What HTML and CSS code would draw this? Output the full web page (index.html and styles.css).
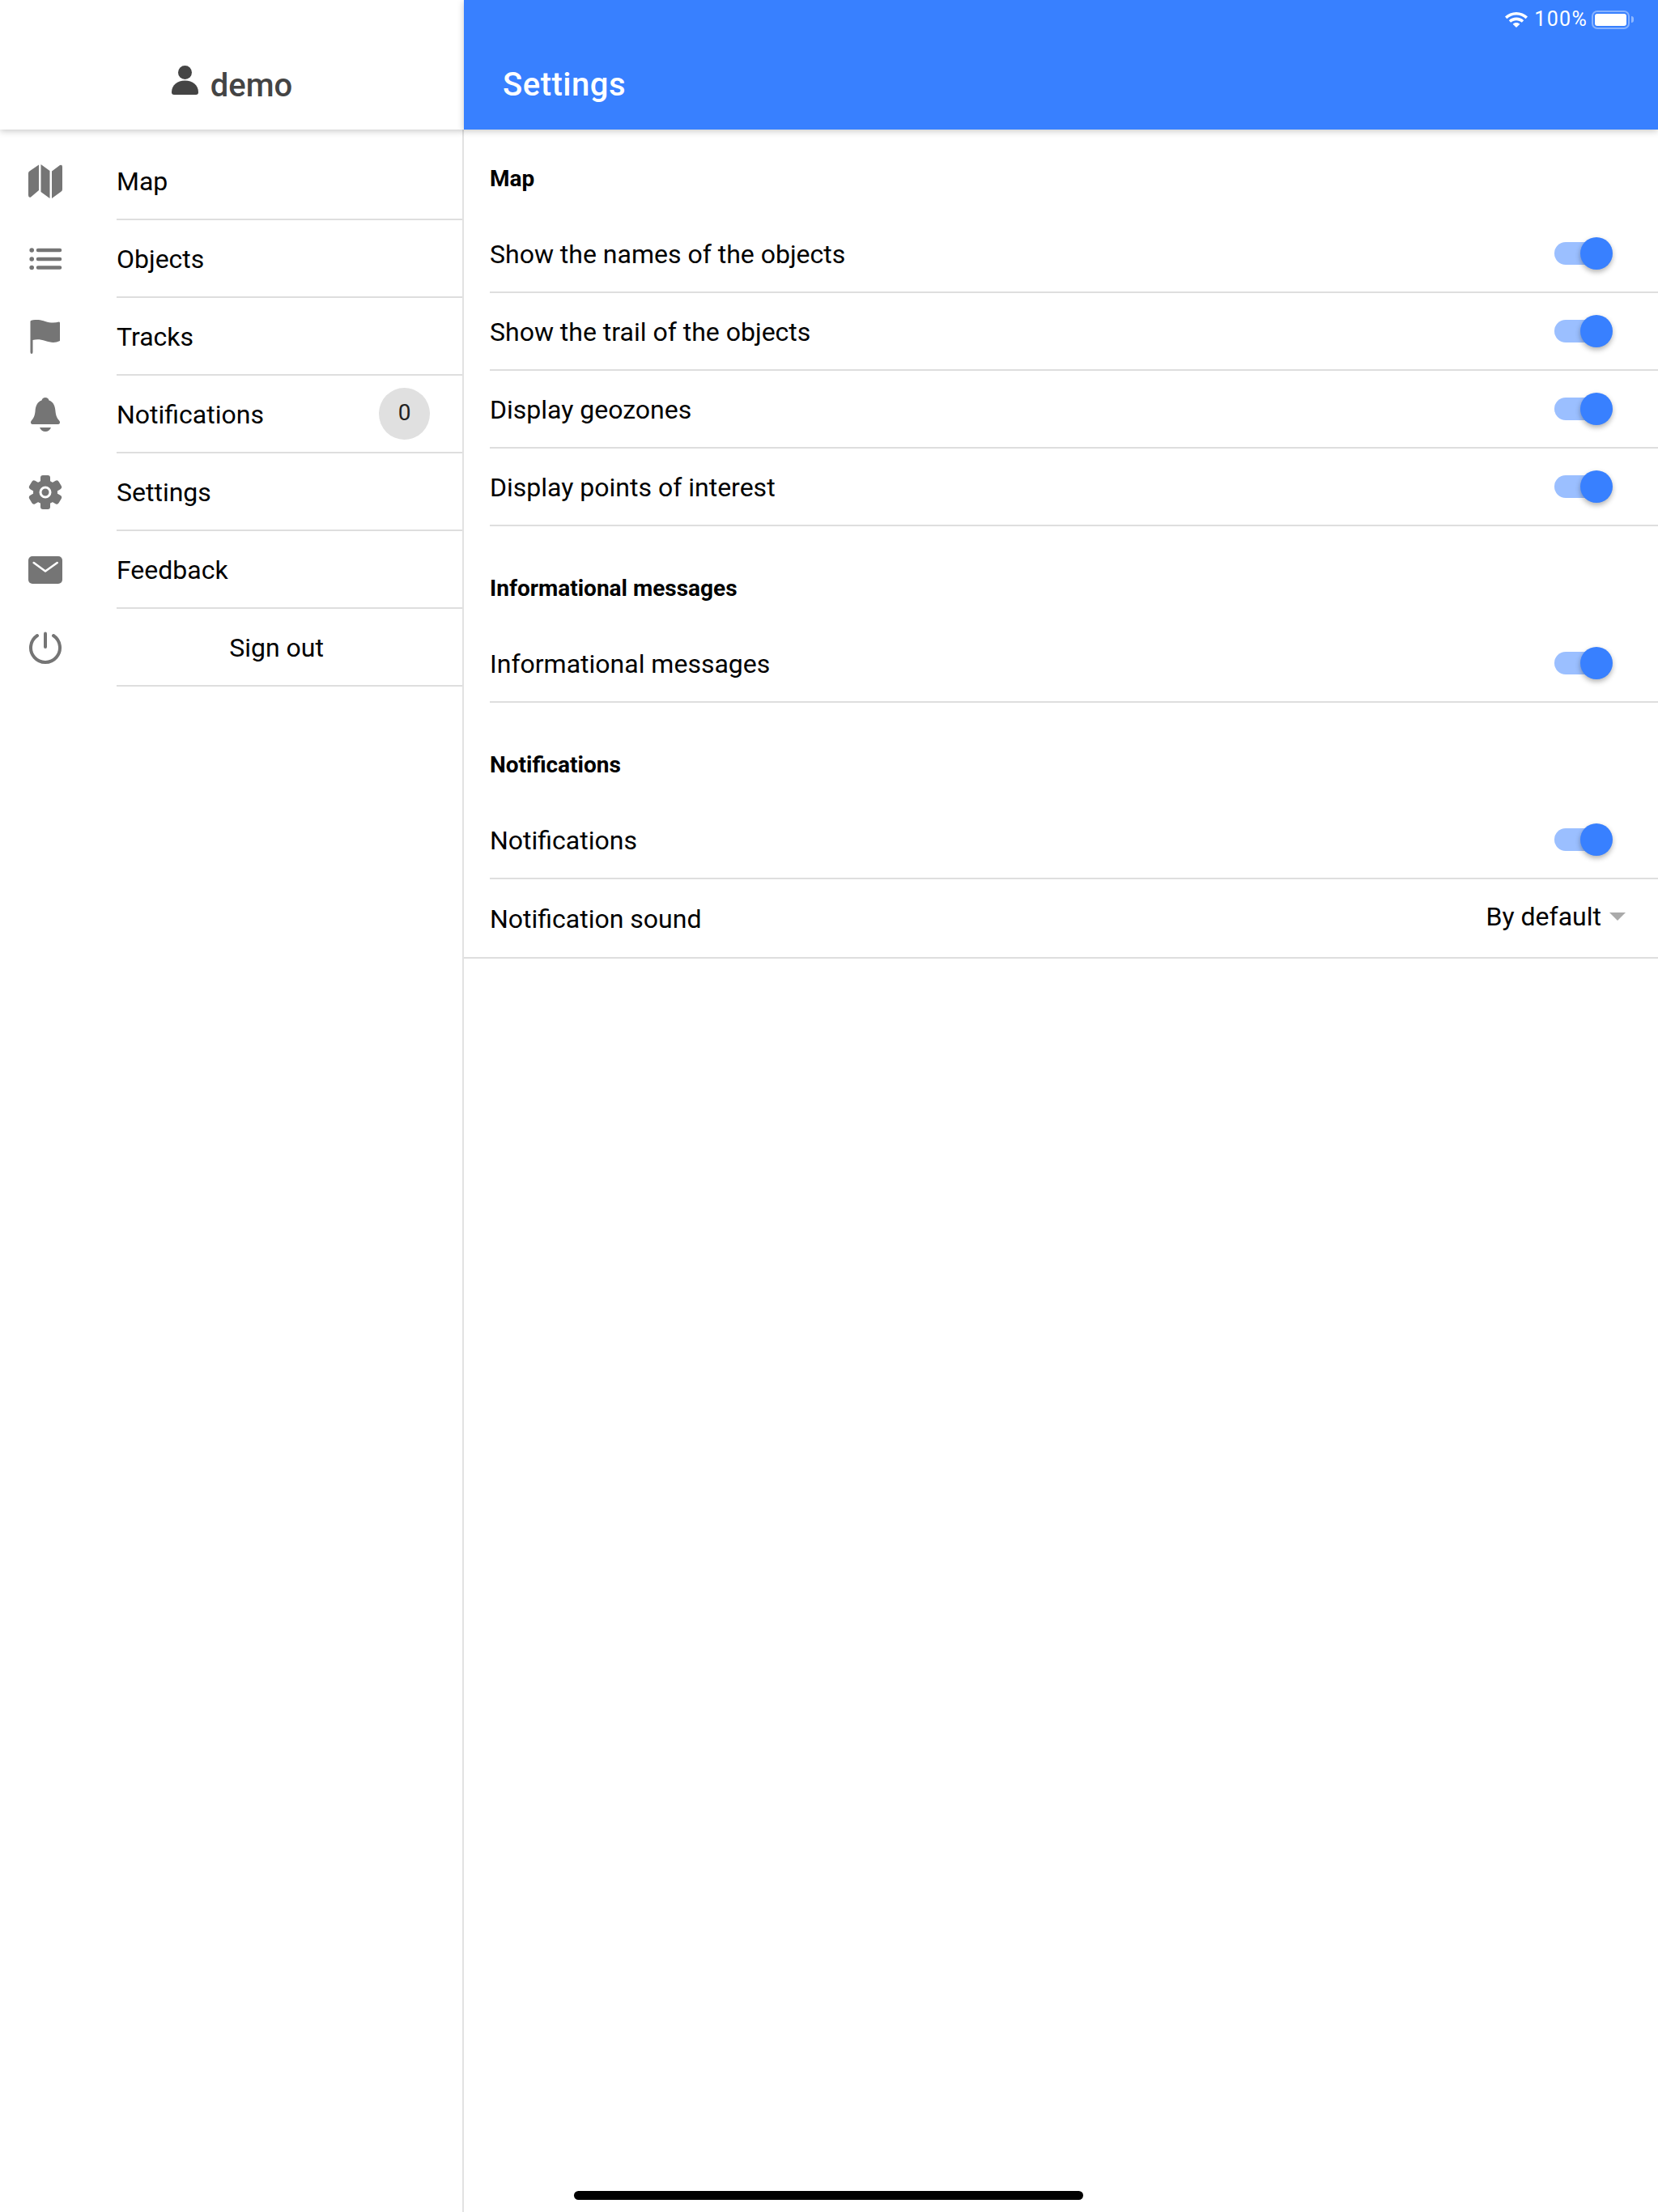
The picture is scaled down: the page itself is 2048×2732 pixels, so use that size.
FILE: index.html
```html
<!DOCTYPE html>
<html lang="en">
<head>
<meta charset="utf-8">
<title>Settings</title>
<link rel="stylesheet" href="styles.css">
</head>
<body>
<div class="app">
  <aside class="side">
    <header class="side-head">
      <svg class="user-icon" viewBox="0 0 33 36" width="33" height="36"><circle cx="16.5" cy="8.5" r="8.5"/><path d="M0 33C0 24 7 18.5 16.5 18.5S33 24 33 33C33 35 32 36 30 36H3C1 36 0 35 0 33Z"/></svg>
      <span class="user-name">demo</span>
    </header>
    <nav class="menu">
      <a class="menu-row"><svg class="menu-icon" viewBox="0 0 42 42"><path d="M0 11Q0 9 2 8L13 .5V32L3 40.5Q0 41.5 0 38Z"/><path d="M15.5 0L26.5 8V42L15.5 34Z"/><path d="M29 8.5L39 1Q42 0 42 3V31Q42 33 40 34L29 42Z"/></svg><span class="menu-label">Map</span></a>
      <a class="menu-row"><svg class="menu-icon" viewBox="0 0 42 42"><circle cx="4.2" cy="10" r="2.8"/><circle cx="4.2" cy="21" r="2.8"/><circle cx="4.2" cy="31.5" r="2.8"/><path class="stroke" d="M12 10H39M12 21H39M12 31.5H39"/></svg><span class="menu-label">Objects</span></a>
      <a class="menu-row"><svg class="menu-icon" viewBox="0 0 42 42"><path d="M3 1C10-1 15 0 21 2C27 4 33 4 38 2.5Q39 2.5 39 4V26C33 29 27 28 21 26C15 24 10 24 5.5 25V40Q5.5 42 4 42Q2.5 42 2.5 40V2Z"/></svg><span class="menu-label">Tracks</span></a>
      <a class="menu-row"><svg class="menu-icon" viewBox="0 0 42 42"><path d="M21 0C23.5 0 25 1.5 25.5 3.5C31 5.5 33 10 33.5 17C34 23 36 26 38.5 29C39.5 30.5 39 33 37 33H5C3 33 2.5 30.5 3.5 29C6 26 8 23 8.5 17C9 10 11 5.5 16.5 3.5C17 1.5 18.5 0 21 0Z"/><path d="M14 37H28C27 40 24 42 21 42C18 42 15 40 14 37Z"/></svg><span class="menu-label">Notifications</span><span class="badge">0</span></a>
      <a class="menu-row"><svg class="menu-icon" viewBox="0 0 42 42"><circle cx="21" cy="21" r="15"/><rect x="15" y="0" width="12" height="42" rx="3"/><rect x="15" y="0" width="12" height="42" rx="3" transform="rotate(60 21 21)"/><rect x="15" y="0" width="12" height="42" rx="3" transform="rotate(120 21 21)"/><circle class="ring" cx="21" cy="21" r="6"/></svg><span class="menu-label">Settings</span></a>
      <a class="menu-row"><svg class="menu-icon" viewBox="0 0 42 42"><rect x="0" y="4" width="42" height="34" rx="5"/><path class="chev" d="M6.7 12L21 22.5L35.7 12"/></svg><span class="menu-label">Feedback</span></a>
      <a class="menu-row"><svg class="menu-icon" viewBox="0 0 42 42"><path class="stroke-thin" d="M11 6A18 18 0 1 0 31 6"/><path class="stroke-thin" d="M21 3.5V20"/></svg><span class="menu-label menu-center">Sign out</span></a>
    </nav>
  </aside>
  <main class="main">
    <header class="main-head">
      <div class="status">
        <svg class="wifi" viewBox="0 0 28 19" width="28" height="19"><path d="M14 0C19.5 0 24.3 2.2 28 5.6L25.6 8.2C22.5 5.3 18.5 3.6 14 3.6S5.5 5.3 2.4 8.2L0 5.6C3.7 2.2 8.5 0 14 0Z"/><path d="M14 6.6C17.6 6.6 20.8 8 23.2 10.2L20.8 12.8C19 11.2 16.6 10.2 14 10.2S9 11.2 7.2 12.8L4.8 10.2C7.2 8 10.4 6.6 14 6.6Z"/><path d="M14 13C15.6 13 17.2 13.6 18.4 14.7L14 19L9.6 14.7C10.8 13.6 12.4 13 14 13Z"/></svg>
        <span class="status-text">100%</span>
        <span class="battery"><span class="battery-fill"></span></span>
        <span class="battery-nub"></span>
      </div>
      <h1 class="title">Settings</h1>
    </header>
    <section class="group">
      <h2 class="group-title">Map</h2>
      <div class="row"><span class="row-label">Show the names of the objects</span><span class="toggle"><span class="thumb"></span></span></div>
      <div class="row"><span class="row-label">Show the trail of the objects</span><span class="toggle"><span class="thumb"></span></span></div>
      <div class="row"><span class="row-label">Display geozones</span><span class="toggle"><span class="thumb"></span></span></div>
      <div class="row"><span class="row-label">Display points of interest</span><span class="toggle"><span class="thumb"></span></span></div>
    </section>
    <section class="group">
      <h2 class="group-title">Informational messages</h2>
      <div class="row"><span class="row-label">Informational messages</span><span class="toggle"><span class="thumb"></span></span></div>
    </section>
    <section class="group">
      <h2 class="group-title">Notifications</h2>
      <div class="row"><span class="row-label">Notifications</span><span class="toggle"><span class="thumb"></span></span></div>
      <div class="row row-select"><span class="row-label">Notification sound</span><span class="select"><span class="select-text">By default</span><span class="select-arrow"></span></span></div>
    </section>
  </main>
</div>
<div class="home-bar"></div>
</body>
</html>
```
FILE: styles.css
```css
* { box-sizing: border-box; }
html, body { margin: 0; height: 100%; }
body { font-family: Roboto, "Liberation Sans", sans-serif; color: #000; background: #fff; position: relative; overflow: hidden; }
.app { display: flex; height: 2732px; }

.side { width: 573px; flex: none; border-right: 2px solid #e2e2e2; }
.side-head { height: 160px; margin-right: -2px; display: flex; justify-content: center; align-items: flex-end; padding-bottom: 34px; gap: 15px; background: #fff; box-shadow: 0 2px 8px rgba(0,0,0,.22); position: relative; }
.user-icon { fill: #444; margin-bottom: 9px; }
.user-name { font-size: 40px; line-height: 48px; font-weight: 500; color: #444; margin-bottom: -4px; }
.menu { padding-top: 16px; }
.menu-row { display: flex; align-items: center; height: 96px; position: relative; }
.menu-icon { width: 42px; height: 42px; margin: 0 67px 0 35px; flex: none; fill: #757575; }
.stroke { fill: none; stroke: #757575; stroke-width: 4.5; stroke-linecap: round; }
.stroke-thin { fill: none; stroke: #757575; stroke-width: 4; stroke-linecap: round; }
.chev { fill: none; stroke: #fff; stroke-width: 2.6; stroke-linecap: round; stroke-linejoin: round; }
.ring { fill: #757575; stroke: #fff; stroke-width: 3; }
.menu-label { font-size: 32px; line-height: 40px; flex: 1; align-self: stretch; display: flex; align-items: center; border-bottom: 2px solid #dedede; padding-top: 2px; }
.menu-center { justify-content: center; padding-right: 32px; }
.badge { position: absolute; left: 468px; top: 15px; width: 63px; height: 64px; border-radius: 50%; background: #e0e0e0; color: #222; font-size: 28px; display: flex; align-items: center; justify-content: center; padding-bottom: 4px; }

.main { flex: 1; min-width: 0; }
.main-head { height: 160px; background: #3880ff; color: #fff; display: flex; align-items: flex-end; padding: 0 0 31px 48px; position: relative; box-shadow: 0 2px 8px rgba(0,0,0,.22); }
.title { margin: 0; font-size: 40px; line-height: 48px; font-weight: 500; letter-spacing: .5px; }
.status { position: absolute; top: 12px; right: 30px; display: flex; align-items: center; height: 24px; }
.wifi { fill: #fff; margin-right: 8px; }
.status-text { font-size: 25px; line-height: 24px; letter-spacing: 1.3px; margin-right: 5px; }
.battery { width: 47px; height: 23px; border: 2px solid rgba(255,255,255,.4); border-radius: 7px; padding: 2px; display: flex; }
.battery-fill { flex: 1; background: #fff; border-radius: 3px; }
.battery-nub { width: 3px; height: 8px; background: rgba(255,255,255,.45); border-radius: 0 3px 3px 0; margin-left: 2px; }

.group { padding-top: 16px; }
.group:first-of-type { padding-top: 0; }
.group-title { margin: 0; height: 106px; padding: 45px 0 0 32px; font-size: 28px; line-height: 32px; font-weight: 700; }
.row { height: 96px; margin-left: 32px; padding-right: 56px; border-bottom: 2px solid #dedede; display: flex; align-items: center; justify-content: space-between; }
.row-label { font-size: 32px; line-height: 40px; padding-top: 2px; }
.toggle { width: 72px; height: 40px; position: relative; flex: none; }
.toggle::before { content: ""; position: absolute; left: 0; top: 6px; width: 68px; height: 28px; border-radius: 14px; background: #9bbfff; }
.thumb { position: absolute; right: 0; top: 0; width: 40px; height: 40px; border-radius: 50%; background: #3880ff; box-shadow: 0 3px 6px rgba(0,0,0,.3); }
.row-select { height: 98px; margin-left: 0; padding-left: 32px; padding-right: 40px; }
.select { display: flex; align-items: center; gap: 10px; margin-bottom: 4px; }
.select-text { font-size: 32px; line-height: 40px; }
.select-arrow { width: 0; height: 0; border: 10px solid transparent; border-bottom: 0; border-top-color: #aaa; }

.home-bar { position: absolute; left: 709px; top: 2706px; width: 629px; height: 11px; border-radius: 6px; background: #000; }
```
